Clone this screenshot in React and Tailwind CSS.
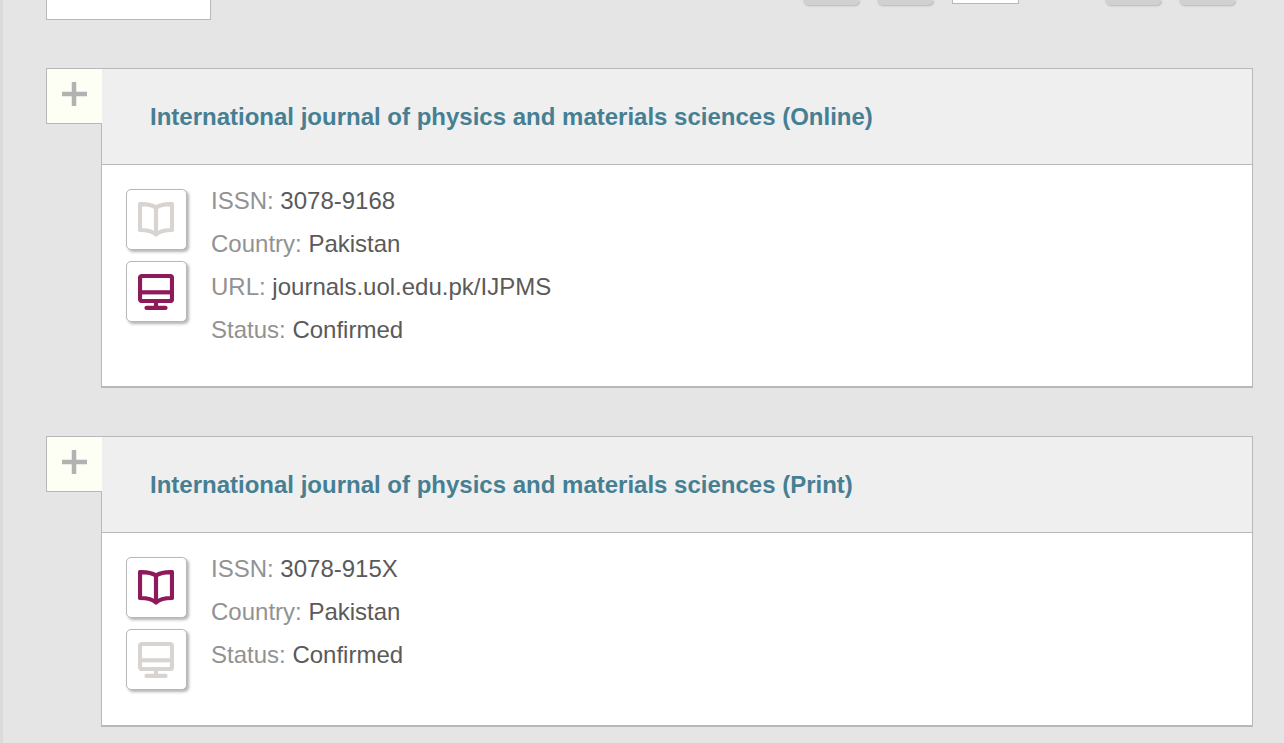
import { useState } from "react";

const records = [
  {
    id: "3078-9168",
    title: "International journal of physics and materials sciences (Online)",
    medium: "online",
    fields: [
      { label: "ISSN:", value: "3078-9168" },
      { label: "Country:", value: "Pakistan" },
      { label: "URL:", value: "journals.uol.edu.pk/IJPMS", href: "#journal" },
      { label: "Status:", value: "Confirmed" },
    ],
  },
  {
    id: "3078-915X",
    title: "International journal of physics and materials sciences (Print)",
    medium: "print",
    fields: [
      { label: "ISSN:", value: "3078-915X" },
      { label: "Country:", value: "Pakistan" },
      { label: "Status:", value: "Confirmed" },
    ],
  },
];

function BookIcon() {
  return (
    <svg
      viewBox="0 0 36 36"
      className="w-9 h-9"
      fill="none"
      stroke="currentColor"
      strokeWidth="4.2"
      strokeLinejoin="round"
      aria-hidden="true"
    >
      <path d="M2 2.2C8 2 14 3 18 5.5C22 3 28 2 34 2.2V28C28 28 21.5 29 18 32.5C14.5 29 8 28 2 28Z" />
      <path d="M18 6V33" />
    </svg>
  );
}

function MonitorIcon() {
  return (
    <svg
      viewBox="0 0 36 36"
      className="w-9 h-9"
      fill="none"
      stroke="currentColor"
      strokeWidth="4.2"
      aria-hidden="true"
    >
      <rect x="2" y="2" width="32" height="25" rx="2" />
      <path d="M2 18.3H34" />
      <path d="M18 27V34" />
      <path d="M8.5 33.9H27.5" strokeLinecap="round" />
    </svg>
  );
}

function MediumBadge({ active, label, children }) {
  return (
    <span
      role="img"
      aria-label={label}
      className={`w-[61px] h-[61px] pl-[11px] pt-3 bg-white border border-[#b8b8b8] rounded-[5px] shadow-[2px_2px_3px_rgba(0,0,0,0.3)] ${
        active ? "text-[#8f1a5b]" : "text-[#d8d4d1]"
      }`}
    >
      {children}
    </span>
  );
}

function PagerButton({ label }) {
  return (
    <button
      type="button"
      aria-label={label}
      className="w-14 h-[5px] bg-[#d1d1d1] rounded-b-[5px] shadow-[1px_1px_2px_rgba(0,0,0,0.2)]"
    />
  );
}

function ResultsToolbar() {
  return (
    <div className="flex items-start justify-between pr-[18px]">
      <select
        aria-label="Sort results"
        className="appearance-none w-[165px] h-5 bg-white border border-t-0 border-[#b8b8b8]"
      />
      <div className="flex items-start">
        <div className="flex gap-[18px]">
          <PagerButton label="First page" />
          <PagerButton label="Previous page" />
        </div>
        <input
          type="text"
          aria-label="Page number"
          className="w-[67px] h-1 mx-[19px] bg-white border border-t-0 border-[#b8b8b8]"
        />
        <div className="flex gap-[18px] pl-[67px]">
          <PagerButton label="Next page" />
          <PagerButton label="Last page" />
        </div>
      </div>
    </div>
  );
}

function RecordCard({ record, selected, onToggle }) {
  return (
    <article className="flex items-start">
      {/* The tab covers the card's left border */}
      <button
        type="button"
        aria-label="Add to selection"
        aria-pressed={selected}
        onClick={onToggle}
        className="relative z-10 flex shrink-0 items-center justify-center w-14 h-14 -mr-px pb-1 bg-[#fdfff5] border border-r-0 border-[#b8b8b8] text-[#b2b2b2]"
      >
        <svg viewBox="0 0 25 25" className="w-[25px] h-[25px]" aria-hidden="true">
          <path
            d="M0 12H25M12 0V24"
            stroke="currentColor"
            strokeWidth="4.5"
          />
        </svg>
      </button>

      <div className="flex-1 min-w-0 border border-b-2 border-[#b8b8b8] bg-white">
        <header className="px-12 py-[31px] bg-[#efefef] border-b border-[#b8b8b8]">
          <h2 className="text-2xl leading-[33px] font-bold text-[#467f93]">
            <a href={`#${record.id}`}>{record.title}</a>
          </h2>
        </header>

        <div className="flex items-start gap-6 px-6 pb-[35px]">
          <div className="flex flex-col gap-[11px] pt-6">
            <MediumBadge active={record.medium === "print"} label="Print">
              <BookIcon />
            </MediumBadge>
            <MediumBadge active={record.medium === "online"} label="Online">
              <MonitorIcon />
            </MediumBadge>
          </div>

          <div className="pt-3.5 text-2xl leading-[43px] text-[#5a5a5a]">
            {record.fields.map((field) => (
              <p key={field.label}>
                <span className="text-[#929292]">{field.label}</span>{" "}
                {field.href ? <a href={field.href}>{field.value}</a> : field.value}
              </p>
            ))}
          </div>
        </div>
      </div>
    </article>
  );
}

export default function App() {
  const [selected, setSelected] = useState([]);

  const toggle = (id) =>
    setSelected((ids) =>
      ids.includes(id) ? ids.filter((item) => item !== id) : [...ids, id]
    );

  return (
    <main className="min-h-screen pl-[43px] pr-[31px] bg-[#e5e5e5] border-l-[3px] border-[#dbdbdb] font-['Liberation_Sans',Arial,sans-serif]">
      <ResultsToolbar />
      <div className="flex flex-col gap-12 pt-12">
        {records.map((record) => (
          <RecordCard
            key={record.id}
            record={record}
            selected={selected.includes(record.id)}
            onToggle={() => toggle(record.id)}
          />
        ))}
      </div>
    </main>
  );
}
